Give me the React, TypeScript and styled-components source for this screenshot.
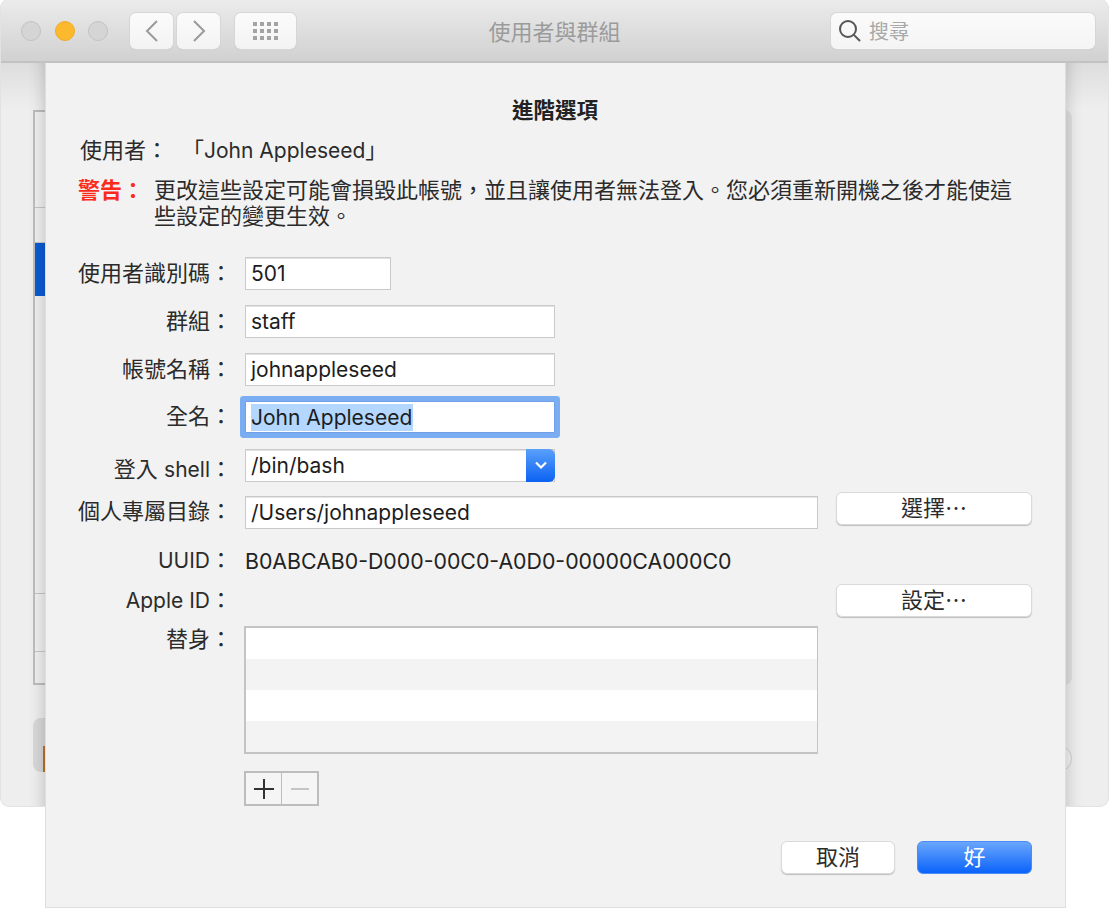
import React from 'react';
import styled, { createGlobalStyle } from 'styled-components';

const GlobalStyle = createGlobalStyle`
  html, body {
    margin: 0;
    padding: 0;
    background: #fff;
    font-family: Inter, "Noto Sans CJK TC", sans-serif;
  }
`

const Page = styled.div`
  position: relative;
  width: 1109px;
  height: 909px;
  overflow: hidden;
  background: #fff;
`

const Window = styled.div`
  margin-left: 1px;
  width: 1107px;
  height: 806px;
  display: flex;
  flex-direction: column;
  border-radius: 8px;
  overflow: hidden;
  background: #ececec;
  box-shadow: 0 0 0 1px #e2e2e2;
`

const TitleBar = styled.div`
  height: 63px;
  flex: none;
  box-sizing: border-box;
  display: grid;
  grid-template-columns: 1fr auto 1fr;
  align-items: center;
  padding: 1px 13px 0;
  background: linear-gradient(#ebebeb, #d1d1d1);
  border-bottom: 2px solid #c2c2c2;
`

const LeftTools = styled.div`
  margin-left: 7px;
  display: flex;
  align-items: center;
`

const Light = styled.span<{ $on?: boolean }>`
  width: 20px;
  height: 20px;
  box-sizing: border-box;
  border-radius: 50%;
  margin-right: 13.5px;
  background: ${p => (p.$on ? '#fdb92d' : '#d5d5d5')};
  border: 1px solid ${p => (p.$on ? '#eeaa2a' : '#c2c2c2')};
`

const ToolButton = styled.div<{ $w: number; $ml: number }>`
  width: ${p => p.$w}px;
  height: 36px;
  margin-left: ${p => p.$ml}px;
  box-sizing: border-box;
  display: flex;
  align-items: center;
  justify-content: center;
  border-radius: 6px;
  background: linear-gradient(#fbfbfb, #f3f3f3);
  box-shadow: 0 0 0 1px #d6d6d6, 0 1px 1px #bcbcbc;
`

const WindowTitle = styled.div`
  font-size: 22px;
  line-height: 30px;
  padding-top: 1px;
  color: #9b9b9b;
`

const SearchBox = styled.div`
  justify-self: end;
  width: 264px;
  height: 36px;
  box-sizing: border-box;
  display: flex;
  align-items: center;
  gap: 8px;
  padding: 0 0 1px 8px;
  border-radius: 6px;
  font-size: 20px;
  color: #a8a8a8;
  background: linear-gradient(#fbfbfb, #f4f4f4);
  box-shadow: 0 0 0 1px #d6d6d6, 0 1px 1px #bcbcbc;
`

const WindowBody = styled.div`
  position: relative;
  flex: 1;
  display: flex;
  gap: 20px;
  padding: 47px 36px 0 32px;
  background: linear-gradient(rgba(0, 0, 0, 0.07), transparent 45px), #eeeeee;
  overflow: hidden;

  &::after {
    content: '';
    position: absolute;
    left: 44px;
    right: 42px;
    top: -30px;
    bottom: -200px;
    box-shadow: 0 0 16px rgba(0, 0, 0, 0.22);
  }
`

const Side = styled.div`
  width: 300px;
  display: flex;
  flex-direction: column;
`

const List = styled.div`
  height: 575px;
  display: flex;
  flex-direction: column;
  box-sizing: border-box;
  border: 2px solid #bdbdbd;
  background: #f0f0f0;
`

const ListRow = styled.div<{ $h: number; $active?: boolean }>`
  height: ${p => p.$h}px;
  flex: none;
  box-sizing: border-box;
  background: ${p => (p.$active ? '#0a5bd3' : 'transparent')};
  border-bottom: ${p => (p.$active ? 'none' : '1px solid #c6c6c6')};
`

const LockBar = styled.div`
  margin-top: 33px;
  height: 54px;
  box-sizing: border-box;
  border-radius: 8px;
  background: #d8d8d8;
  padding: 28px 0 0 10px;
`

const Avatar = styled.div`
  width: 26px;
  height: 26px;
  background: #b9722c;
`

const Detail = styled.div`
  flex: 1;
  height: 575px;
  display: flex;
  flex-direction: column;
  align-items: flex-end;
  border-radius: 8px;
  background: #e0e0e0;
`

const HelpSlot = styled.div`
  margin-top: 635px;
  width: 27px;
  height: 27px;
  flex: none;
  box-sizing: border-box;
  border-radius: 50%;
  border: 1px solid #cfcfcf;
  background: #f2f2f2;
`

/* the sheet sits over the window, hanging off its title bar */
const Sheet = styled.div`
  position: absolute;
  left: 45px;
  top: 63px;
  width: 1021px;
  height: 845px;
  box-sizing: border-box;
  display: flex;
  flex-direction: column;
  padding: 34px 33px 0 32px;
  background: #f2f2f2;
  border: 1px solid #dedede;
  border-top: none;
  font-size: 22px;
  line-height: 26px;
  color: #2b2b2b;
`

const SheetTitle = styled.div`
  height: 26px;
  text-align: center;
  font-weight: 700;
  font-size: 21.5px;
  color: #222;
`

const UserLine = styled.div`
  height: 26px;
  margin: 14px 0 0 2px;
  display: flex;
  gap: 14px;
`

// latin runs are set a touch smaller than the CJK around them
const Latin = styled.span`
  font-size: 21px;
`

const Warning = styled.div`
  margin-top: 14px;
  display: flex;
`

const WarnLabel = styled.div`
  width: 76px;
  flex: none;
  color: #fb2a1c;
  font-weight: 700;
`

const Row = styled.div<{ $mt: number; $h?: number; $align?: string }>`
  margin-top: ${p => p.$mt}px;
  height: ${p => p.$h ?? 33}px;
  display: grid;
  grid-template-columns: 167px 573px 214px;
  align-items: ${p => p.$align ?? 'center'};
`

const Label = styled.div<{ $nudge?: number; $self?: string }>`
  box-sizing: border-box;
  height: fit-content;
  padding-right: 13px;
  text-align: right;
  white-space: nowrap;
  align-self: ${p => p.$self ?? 'auto'};
  padding-top: ${p => Math.max(p.$nudge ?? 0, 0) * 2}px;
  padding-bottom: ${p => Math.max(-(p.$nudge ?? 0), 0) * 2}px;
`

const Field = styled.div<{ $w?: number; $focus?: boolean }>`
  width: ${p => (p.$w ? `${p.$w}px` : '100%')};
  height: ${p => (p.$focus ? 32 : 33)}px;
  box-sizing: border-box;
  display: flex;
  align-items: center;
  padding-left: 5px;
  background: #fff;
  color: #1d1d1d;
  font-size: 21px;
  white-space: nowrap;
  border: ${p => (p.$focus ? '1px solid #6f9fe6' : '1px solid #c9c9c9')};
  box-shadow: ${p => (p.$focus ? '0 0 0 5px #7badf2' : 'inset 0 1px 0 #e4e4e4')};
  border-radius: ${p => (p.$focus ? '1px' : '0')};
`

const Selected = styled.span`
  background: #b3d7ff;
  padding-right: 1px;
  line-height: 27px;
`

const SelectArrow = styled.div`
  margin: -1px -1px -1px auto;
  width: 29px;
  height: 33px;
  flex: none;
  display: flex;
  align-items: center;
  justify-content: center;
  border-radius: 0 6px 6px 0;
  background: linear-gradient(#5aa0fb, #0b62f2);
`

const PlainValue = styled.div`
  white-space: nowrap;
  color: #222;
  font-size: 21.3px;
`

const Button = styled.div<{ $primary?: boolean; $w: number; $self?: string }>`
  width: ${p => p.$w}px;
  height: 33px;
  box-sizing: border-box;
  display: flex;
  align-items: center;
  justify-content: center;
  justify-self: end;
  align-self: ${p => p.$self ?? 'center'};
  padding-bottom: 2px;
  border-radius: 6px;
  color: ${p => (p.$primary ? '#fff' : '#2b2b2b')};
  background: ${p => (p.$primary ? 'linear-gradient(#6aa6fb, #0b63fb)' : '#fff')};
  border: 1px solid ${p => (p.$primary ? '#4a8cf5' : '#dadada')};
  box-shadow: ${p => (p.$primary ? 'none' : '0 1px 1px #bdbdbd')};
`

const Aliases = styled.div`
  height: 128px;
  box-sizing: border-box;
  margin-left: -1px;
  display: flex;
  flex-direction: column;
  border: 2px solid #c4c4c4;
  border-right-width: 1px;
  background: #fff;
`

const AliasRow = styled.div<{ $alt?: boolean }>`
  flex: 1;
  background: ${p => (p.$alt ? '#f3f3f3' : '#fff')};
`

const Stepper = styled.div`
  margin-left: -1px;
  width: 75px;
  height: 35px;
  box-sizing: border-box;
  display: flex;
  border: 2px solid #bdbdbd;
  background: #f5f5f5;
`

const StepButton = styled.div<{ $divider?: boolean }>`
  flex: 1;
  display: flex;
  align-items: center;
  justify-content: center;
  border-right: ${p => (p.$divider ? '1px solid #bdbdbd' : 'none')};
`

const Footer = styled.div`
  margin-top: 35px;
  display: flex;
  justify-content: flex-end;
  gap: 22px;
`

const BackIcon = () => (
  <svg width="14" height="24" viewBox="0 0 14 24" fill="none">
    <path d="M12 2 2 12l10 10" stroke="#9a9a9a" strokeWidth="2" />
  </svg>
)

const ForwardIcon = () => (
  <svg width="14" height="24" viewBox="0 0 14 24" fill="none">
    <path d="M2 2l10 10L2 22" stroke="#9a9a9a" strokeWidth="2" />
  </svg>
)

const GridIcon = () => (
  <svg width="25" height="18" viewBox="0 0 25 18" fill="#a3a3a3">
    {[0, 7, 14].map(y =>
      [0, 7, 14, 21].map(x => <rect key={`${x}-${y}`} x={x} y={y} width="4" height="4" />)
    )}
  </svg>
)

const SearchIcon = () => (
  <svg width="22" height="22" viewBox="0 0 22 22" fill="none" stroke="#555" strokeWidth="2">
    <circle cx="9" cy="9" r="8" />
    <path d="M14.6 14.6 21 21" />
  </svg>
)

const ChevronDown = () => (
  <svg width="14" height="9" viewBox="0 0 14 9" fill="none" stroke="#fff" strokeWidth="2.2">
    <path d="M2 1.5 7 6.5l5-5" />
  </svg>
)

const PlusIcon = () => (
  <svg width="20" height="20" viewBox="0 0 20 20" stroke="#333" strokeWidth="2">
    <path d="M0 10h20M10 0v20" />
  </svg>
)

const MinusIcon = () => (
  <svg width="20" height="20" viewBox="0 0 20 20" stroke="#c4c4c4" strokeWidth="2">
    <path d="M1 10h18" />
  </svg>
)

const App: React.FC = () => {
  return (
    <Page>
      <GlobalStyle />
      <Window>
        <TitleBar>
          <LeftTools>
            <Light />
            <Light $on />
            <Light />
            <ToolButton $w={43} $ml={8.5}><BackIcon /></ToolButton>
            <ToolButton $w={43} $ml={4}><ForwardIcon /></ToolButton>
            <ToolButton $w={61} $ml={15}><GridIcon /></ToolButton>
          </LeftTools>
          <WindowTitle>使用者與群組</WindowTitle>
          <SearchBox>
            <SearchIcon />
            搜尋
          </SearchBox>
        </TitleBar>
        <WindowBody>
          <Side>
            <List>
              <ListRow $h={96} />
              <ListRow $h={35} />
              <ListRow $h={53} $active />
              <ListRow $h={298} />
              <ListRow $h={58} />
            </List>
            <LockBar><Avatar /></LockBar>
          </Side>
          <Detail>
            <HelpSlot />
          </Detail>
        </WindowBody>
      </Window>

      <Sheet>
        <SheetTitle>進階選項</SheetTitle>
        <UserLine>
          <span>使用者：</span>
          <span>「<Latin>John Appleseed</Latin>」</span>
        </UserLine>
        <Warning>
          <WarnLabel>警告：</WarnLabel>
          <div>更改這些設定可能會損毀此帳號，並且讓使用者無法登入。您必須重新開機之後才能使這些設定的變更生效。</div>
        </Warning>

        <Row $mt={28}>
          <Label $nudge={-1}>使用者識別碼：</Label>
          <Field $w={146}>501</Field>
        </Row>
        <Row $mt={15}>
          <Label $nudge={-1}>群組：</Label>
          <Field $w={310}>staff</Field>
        </Row>
        <Row $mt={15}>
          <Label $nudge={-1}>帳號名稱：</Label>
          <Field $w={310}>johnappleseed</Field>
        </Row>
        <Row $mt={15} $h={32}>
          <Label $nudge={-1}>全名：</Label>
          <Field $w={310} $focus><Selected>John Appleseed</Selected></Field>
        </Row>
        <Row $mt={15}>
          <Label $nudge={4}>登入 <Latin>shell</Latin>：</Label>
          <Field $w={310}>
            /bin/bash
            <SelectArrow><ChevronDown /></SelectArrow>
          </Field>
        </Row>
        <Row $mt={11} $h={37} $align="end">
          <Label $self="center">個人專屬目錄：</Label>
          <Field>/Users/johnappleseed</Field>
          <Button $w={196} $self="start">選擇⋯</Button>
        </Row>
        <Row $mt={15}>
          <Label><Latin>UUID</Latin>：</Label>
          <PlainValue>B0ABCAB0-D000-00C0-A0D0-00000CA000C0</PlainValue>
        </Row>
        <Row $mt={7}>
          <Label><Latin>Apple ID</Latin>：</Label>
          <div />
          <Button $w={196}>設定⋯</Button>
        </Row>
        <Row $mt={9} $h={128} $align="start">
          <Label>替身：</Label>
          <Aliases>
            <AliasRow />
            <AliasRow $alt />
            <AliasRow />
            <AliasRow $alt />
          </Aliases>
        </Row>
        <Row $mt={17} $h={35}>
          <div />
          <Stepper>
            <StepButton $divider><PlusIcon /></StepButton>
            <StepButton><MinusIcon /></StepButton>
          </Stepper>
        </Row>
        <Footer>
          <Button $w={114}>取消</Button>
          <Button $w={115} $primary>好</Button>
        </Footer>
      </Sheet>
    </Page>
  )
}

export default App
